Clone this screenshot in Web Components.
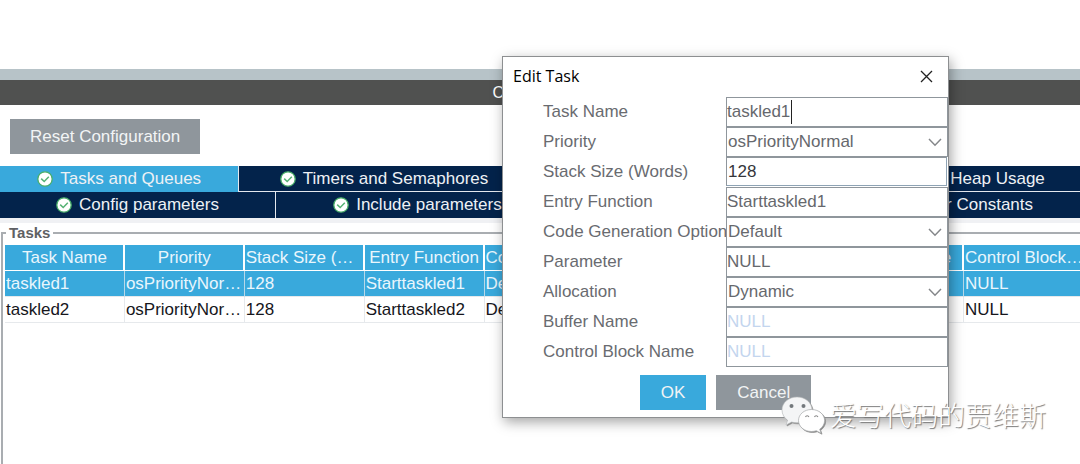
<!DOCTYPE html>
<html lang="en">
<head>
<meta charset="utf-8">
<title>Configuration</title>
<style>
  html, body { margin: 0; }
  body { background: #fff; font: 17px/26px "Liberation Sans", Arial, sans-serif; color: #696b70; }
</style>
</head>
<body>
<config-page>
  <config-button slot="tools">Reset Configuration</config-button>
  <tab-row slot="tabs" active>
    <tab-item style="--w:240" active>Tasks and Queues</tab-item>
    <tab-item style="--w:291">Timers and Semaphores</tab-item>
    <tab-item style="--w:136">Mutexes</tab-item>
    <tab-item style="--w:136">Events</tab-item>
    <tab-item style="--w:284">FreeRTOS Heap Usage</tab-item>
  </tab-row>
  <tab-row slot="tabs">
    <tab-item style="--w:276">Config parameters</tab-item>
    <tab-item style="--w:284">Include parameters</tab-item>
    <tab-item style="--w:282">Advanced settings</tab-item>
    <tab-item style="--w:243">User Constants</tab-item>
  </tab-row>
  <task-table></task-table>
  <edit-dialog slot="overlay" heading="Edit Task">
    <form-field label="Task Name" value="taskled1" caret></form-field>
    <form-field label="Priority" value="osPriorityNormal" kind="select"></form-field>
    <form-field label="Stack Size (Words)" value="128" kind="number"></form-field>
    <form-field label="Entry Function" value="Starttaskled1"></form-field>
    <form-field label="Code Generation Option" value="Default" kind="select"></form-field>
    <form-field label="Parameter" value="NULL"></form-field>
    <form-field label="Allocation" value="Dynamic" kind="select"></form-field>
    <form-field label="Buffer Name" value="NULL" disabled></form-field>
    <form-field label="Control Block Name" value="NULL" disabled></form-field>
    <config-button slot="actions" primary>OK</config-button>
    <config-button slot="actions">Cancel</config-button>
  </edit-dialog>
  <account-mark slot="overlay">爱写代码的贾维斯</account-mark>
</config-page>

<script>
const define = (name, html) => customElements.define(name, class extends HTMLElement {
  constructor() {
    super();
    this.attachShadow({ mode: "open" });
  }
  connectedCallback() {
    this.shadowRoot.innerHTML = typeof html === "function" ? html(this) : html;
  }
});

define("config-page", `
<style>
  :host { display: flex; flex-direction: column; position: relative; overflow: hidden; min-height: 100vh; box-sizing: border-box; padding-top: 69px; }
  header { flex: none; border-top: 11px solid #b7c3c8; background: #505150; color: #fff; height: 25px; font-size: 16px; line-height: 25px; text-align: center; }
  h1 { margin: 0; font: inherit; }
  .tools { flex: none; padding: 14px 10px 12px; }
  nav { flex: none; margin-right: -5px; border-bottom: 5px solid #f0f1f4; }
  main { flex: 1; display: flex; margin-right: -6px; padding-top: 1px; }
  main ::slotted(*) { flex: 1; }
</style>
<header><h1>Configuration</h1></header>
<div class="tools"><slot name="tools"></slot></div>
<nav><slot name="tabs"></slot></nav>
<main><slot></slot></main>
<slot name="overlay"></slot>`);

define("config-button", `
<style>
  :host { display: inline-block; vertical-align: top; }
  button { display: block; height: 35px; border: 0; margin: 0; padding: 0 var(--pad, 20px); background: #8f969c; color: #f2f4f5; font: inherit; line-height: 35px; }
  :host([primary]) button { background: #39a9dc; }
</style>
<button type="button"><slot></slot></button>`);

define("tab-row", `
<style>
  :host { display: flex; height: 26px; box-sizing: border-box; background: #03234b; }
  :host([active]) { border-bottom: 1px solid #e4e8ee; }
</style>
<slot></slot>`);

define("tab-item", `
<style>
  :host { display: block; flex: var(--w) 1 0; min-width: 0; box-sizing: border-box; border-right: 1px solid #e4e8ee; }
  button { display: flex; width: 100%; height: 100%; align-items: center; justify-content: center; gap: 7px; margin: 0; border: 0; padding: 0; background: #03234b; color: #eef1f5; font: inherit; white-space: nowrap; overflow: hidden; }
  :host([active]) button { background: #39a9dc; height: 26px; }
  svg { flex: none; width: 16px; height: 16px; }
</style>
<button type="button">
  <svg viewBox="0 0 16 16" aria-hidden="true"><circle cx="8" cy="8" r="7.200" fill="#fff" stroke="#49ae69" stroke-width="1.300"/><path d="M4.200 7.600 7.200 10.500 11.800 5.800" fill="none" stroke="#55b274" stroke-width="1.500"/></svg>
  <span><slot></slot></span>
</button>`);

const columns = ["Task Name", "Priority", "Stack Size (Words)", "Entry Function", "Code Generation Option", "Parameter", "Allocation", "Buffer Name", "Control Block Name"];
const tasks = [
  ["taskled1", "osPriorityNormal", "128", "Starttaskled1", "Default", "NULL", "Dynamic", "NULL", "NULL"],
  ["taskled2", "osPriorityNormal", "128", "Starttaskled2", "Default", "NULL", "Dynamic", "NULL", "NULL"]
];
define("task-table", () => `
<style>
  :host { display: flex; }
  fieldset { flex: 1; min-width: 0; margin: 0 0 0 1px; border: 2px solid #a9adb1; border-bottom: 0; padding: 3px 0 0 2px; }
  legend { margin-left: 1px; padding: 0 3px; font-size: 15px; line-height: 18px; font-weight: bold; color: #5f6164; }
  table { width: 100%; table-layout: fixed; border-collapse: separate; border-spacing: 0; }
  th, td { box-sizing: border-box; height: 26px; padding: 0 2px 0 1px; border-bottom: 1px solid #e6e9ec; border-right: 1px solid #e6e9ec; font-weight: normal; text-align: left; line-height: 25px; white-space: nowrap; overflow: hidden; text-overflow: ellipsis; color: #16161c; }
  th { padding: 0 0 0 1px; text-align: center; background: #39a9dc; color: #e9f6fc; border-right: 2px solid #fff; border-bottom: 1px solid #fff; }
  .on td { background: #39a9dc; color: #e9f6fc; border-right-color: #b8d8e8; }
  th:last-child { border-right: 0; }
</style>
<fieldset><legend>Tasks</legend>
<table>
  <thead><tr>${columns.map(c => `<th scope="col">${c}</th>`).join("")}</tr></thead>
  <tbody>${tasks.map((t, i) => `<tr class="${i ? "" : "on"}">${t.map(v => `<td>${v}</td>`).join("")}</tr>`).join("")}</tbody>
</table></fieldset>`);

define("edit-dialog", host => `
<style>
  :host { display: block; position: absolute; left: 502px; top: 56px; width: 447px; box-sizing: border-box; border: 1px solid #8d8f91; background: #fff; box-shadow: 2px 4px 12px rgba(0,0,0,.36); --pad: 21px; }
  header { display: flex; align-items: center; justify-content: space-between; height: 38px; padding: 0 15px 2px 10px; }
  h2 { margin: 0; font: 16px/24px "Open Sans", "Noto Sans", sans-serif; color: #000; }
  header button { display: flex; margin: 0; border: 0; padding: 0; background: none; }
  footer { display: flex; justify-content: center; gap: 10px; padding: 8px 0 7px; }
</style>
<section role="dialog" aria-label="${host.getAttribute("heading")}">
  <header><h2>${host.getAttribute("heading")}</h2>
    <button type="button" aria-label="Close"><svg width="13" height="13" viewBox="0 0 13 13" aria-hidden="true"><path d="M1 1 12 12M12 1 1 12" stroke="#222" stroke-width="1.300" fill="none"/></svg></button>
  </header>
  <form><slot></slot></form>
  <footer><slot name="actions"></slot></footer>
</section>`);

define("form-field", host => {
  const label = host.getAttribute("label"), value = host.getAttribute("value"), kind = host.getAttribute("kind");
  const control = kind === "select"
    ? `<select id="f"><option>${value}</option></select><svg width="14" height="9" viewBox="0 0 14 9" aria-hidden="true"><path d="M1 1 7 7.200 13 1" fill="none" stroke="#85878a" stroke-width="1.500"/></svg>`
    : `<input id="f" type="text" value="${value}" autocomplete="off" spellcheck="false"${host.hasAttribute("disabled") ? " disabled" : ""}>`;
  return `
<style>
  :host { display: grid; grid-template-columns: 183px 1fr; height: 30px; padding-left: 40px; }
  label { line-height: 30px; white-space: nowrap; }
  .box { position: relative; display: flex; }
  input, select { width: 100%; height: 30px; box-sizing: border-box; margin: 0; border: 1px solid #8f969c; border-radius: 0; padding: 0; background: #fff; color: #66686d; font: inherit; appearance: none; outline: 0; }
  select { padding-left: 1px; }
  :host([kind="number"]) input { padding-left: 1px; color: #35363b; border-color: #8f969c #8ea3b4 #8ea3b4 #8f969c; height: 29px; width: calc(100% - 1px); }
  input:disabled { color: #c3d5ee; -webkit-text-fill-color: #c3d5ee; }
  svg { position: absolute; right: 6px; top: 11px; pointer-events: none; }
  :host([caret]) .box::after { content: ""; position: absolute; left: 65px; top: 3px; width: 1px; height: 24px; background: #222; }
</style>
<label for="f">${label}</label><div class="box">${control}</div>`;
});

define("account-mark", `
<style>
  :host { display: flex; align-items: center; gap: 4px; position: absolute; right: 34px; top: 395px; height: 40px; color: #fff; font: 300 27px/40px "Noto Sans CJK SC", sans-serif; text-shadow: 1px 1px 1px #777; white-space: nowrap; pointer-events: none; }
  svg { display: block; width: 45px; height: 38px; filter: drop-shadow(1px 1px 0 #8a8a8a); }
</style>
<svg viewBox="0 0 45 38" aria-hidden="true">
  <path d="M16 1C7.500 1 1 6.800 1 14c0 4.200 2.100 7.800 5.600 10.200L5 29l5.600-3c1.700.5 3.500.8 5.400.8 8.500 0 15-5.600 15-12.800S24.500 1 16 1Z" fill="#f4f5f6" stroke="#b5b8ba" stroke-width=".6"/>
  <path d="M30.500 13.500c-7.300 0-13 4.900-13 11s5.700 11 13 11c1.700 0 3.300-.3 4.800-.8l4.700 2.500-1.300-4c3-2.100 4.900-5.200 4.900-8.700 0-6.100-5.800-11-13.100-11Z" fill="#fff" stroke="#a5a7a9" stroke-width=".7"/>
  <g fill="#73787c"><circle cx="10.500" cy="10" r="2"/><circle cx="22.500" cy="10" r="2"/></g>
  <g fill="none" stroke="#888" stroke-width="1.100"><path d="M24.500 21a1.800 1.800 0 0 1 3.400 0M33.500 21a1.800 1.800 0 0 1 3.400 0"/></g>
</svg>
<span><slot></slot></span>`);
</script>
</body>
</html>
